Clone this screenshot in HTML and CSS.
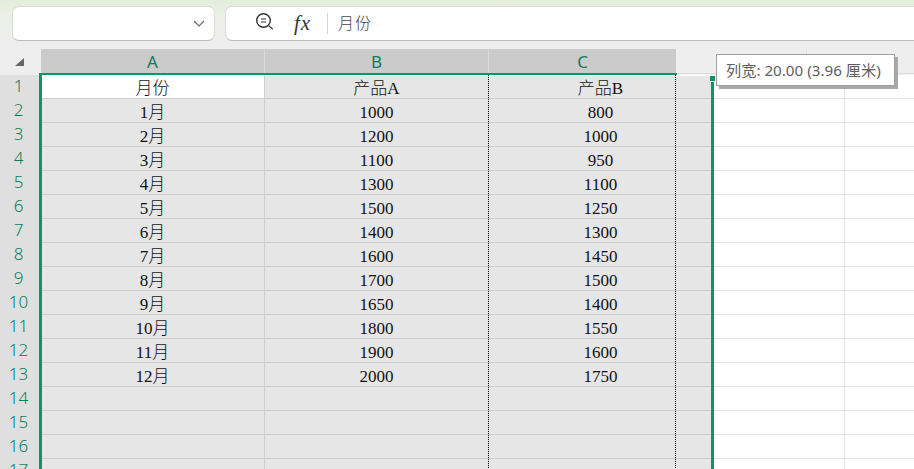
FILE: index.html
```html
<!DOCTYPE html>
<html lang="zh">
<head>
<meta charset="utf-8">
<title>工作表</title>
<link rel="stylesheet" href="styles.css">
</head>
<body>
<div class="app">
  <div class="topbar">
    <div class="namebox">
      <svg class="chev" width="12" height="7" viewBox="0 0 12 7"><path d="M1 1l5 5 5-5" fill="none" stroke="#666" stroke-width="1.1"/></svg>
    </div>
    <div class="formulabar">
      <svg class="zoomicon" width="20" height="20" viewBox="0 0 20 20"><circle cx="8.5" cy="8.5" r="6.8" fill="none" stroke="#333" stroke-width="1.4"/><path d="M6 7h5M6 10h5M13.4 13.4l4.4 3.8" fill="none" stroke="#333" stroke-width="1.2"/></svg>
      <span class="fx">fx</span>
      <span class="fdiv"></span>
      <span class="ftext">月份</span>
    </div>
  </div>
  <div class="sheet">
    <div class="headrow">
      <div class="corner"><svg width="9" height="9" viewBox="0 0 9 9"><path d="M9 0v8H0z" fill="#666"/></svg></div>
      <div class="hcell">A</div>
      <div class="hcell">B</div>
      <div class="hcell last">C</div>
      <div class="hfree"></div>
      <div class="hfree end"></div>
    </div>
    <div class="row first"><div class="rn">1</div><div class="c white">月份</div><div class="c">产品A</div><div class="c">产品B</div><div class="d"></div><div class="e"></div></div>
    <div class="row"><div class="rn">2</div><div class="c">1月</div><div class="c">1000</div><div class="c">800</div><div class="d"></div><div class="e"></div></div>
    <div class="row"><div class="rn">3</div><div class="c">2月</div><div class="c">1200</div><div class="c">1000</div><div class="d"></div><div class="e"></div></div>
    <div class="row"><div class="rn">4</div><div class="c">3月</div><div class="c">1100</div><div class="c">950</div><div class="d"></div><div class="e"></div></div>
    <div class="row"><div class="rn">5</div><div class="c">4月</div><div class="c">1300</div><div class="c">1100</div><div class="d"></div><div class="e"></div></div>
    <div class="row"><div class="rn">6</div><div class="c">5月</div><div class="c">1500</div><div class="c">1250</div><div class="d"></div><div class="e"></div></div>
    <div class="row"><div class="rn">7</div><div class="c">6月</div><div class="c">1400</div><div class="c">1300</div><div class="d"></div><div class="e"></div></div>
    <div class="row"><div class="rn">8</div><div class="c">7月</div><div class="c">1600</div><div class="c">1450</div><div class="d"></div><div class="e"></div></div>
    <div class="row"><div class="rn">9</div><div class="c">8月</div><div class="c">1700</div><div class="c">1500</div><div class="d"></div><div class="e"></div></div>
    <div class="row"><div class="rn">10</div><div class="c">9月</div><div class="c">1650</div><div class="c">1400</div><div class="d"></div><div class="e"></div></div>
    <div class="row"><div class="rn">11</div><div class="c">10月</div><div class="c">1800</div><div class="c">1550</div><div class="d"></div><div class="e"></div></div>
    <div class="row"><div class="rn">12</div><div class="c">11月</div><div class="c">1900</div><div class="c">1600</div><div class="d"></div><div class="e"></div></div>
    <div class="row"><div class="rn">13</div><div class="c">12月</div><div class="c">2000</div><div class="c">1750</div><div class="d"></div><div class="e"></div></div>
    <div class="row"><div class="rn">14</div><div class="c"></div><div class="c"></div><div class="c"></div><div class="d"></div><div class="e"></div></div>
    <div class="row"><div class="rn">15</div><div class="c"></div><div class="c"></div><div class="c"></div><div class="d"></div><div class="e"></div></div>
    <div class="row"><div class="rn">16</div><div class="c"></div><div class="c"></div><div class="c"></div><div class="d"></div><div class="e"></div></div>
    <div class="row"><div class="rn">17</div><div class="c"></div><div class="c"></div><div class="c"></div><div class="d"></div><div class="e"></div></div>

    <div class="sel-top"></div>
    <div class="sel-left"></div>
    <div class="sel-right"></div>
    <div class="sel-handle"></div>
    <div class="dots dots-b"></div>
    <div class="dots dots-c"></div>
    <div class="tip">列宽: 20.00 (3.96 厘米)</div>
  </div>
</div>
</body>
</html>
```

FILE: styles.css
```css
html, body { margin: 0; padding: 0; background: #fff; }
.app {
  width: 914px;
  height: 469px;
  overflow: hidden;
  font-family: "Noto Sans", "Noto Sans CJK SC", sans-serif;
}
.topbar {
  display: flex;
  gap: 11px;
  height: 49px;
  box-sizing: border-box;
  padding: 6px 0 8px 12px;
  background: linear-gradient(#e4edda 0, #eaefe5 14px, #eeeeee 42px);
}
.namebox, .formulabar {
  background: #fff;
  border: 1px solid #dcdcd6;
  border-bottom: 1px solid #bdbdb8;
  box-sizing: border-box;
  height: 35px;
  border-radius: 7px;
  display: flex;
  align-items: center;
}
.namebox { width: 203px; justify-content: flex-end; padding-right: 9px; }
.formulabar { flex: 1; border-radius: 7px 0 0 7px; border-right: 0; padding: 0 0 4px 29px; margin-left: -1px; }
.zoomicon { flex: none; }
.fx {
  font-family: "Liberation Serif", serif;
  font-style: italic;
  font-size: 21px;
  color: #333;
  margin-left: 19px;
  width: 19px;
  letter-spacing: 1px;
  line-height: 1;
  position: relative;
  top: 2px;
}
.fdiv { width: 1px; height: 21px; background: #d4d4d4; margin-left: 14px; position: relative; top: 2px; }
.ftext { font-size: 16px; color: #444; margin-left: 10px; letter-spacing: 1px; font-weight: 300; }

.sheet { position: relative; background: #eeeeee; }
.headrow {
  display: grid;
  grid-template-columns: 41px 224px 224px 187px 131px 1fr;
  height: 26px;
}
.corner { display: flex; align-items: center; justify-content: center; padding: 0 1px 0 0; box-sizing: border-box; }
.corner svg { margin-top: 1px; margin-left: -1px; }
.hcell {
  background: #cbcbcb;
  border-right: 1px solid #dadada;
  color: #107c5c;
  font-size: 17px;
  text-align: center;
  line-height: 26px;
  box-sizing: border-box;
}
.hcell.last { border-right: 0; }
.hfree { border-right: 1px solid #e0e0e0; border-bottom: 1px solid #dcdcdc; box-sizing: border-box; height: 25px; }
.hfree.end { border-right: 0; }

.row {
  display: grid;
  grid-template-columns: 41px 224px 224px 223px 133px 1fr;
  height: 24px;
  background: #fff;
}
.rn {
  background: #dfdfdf;
  color: #0a7f5d;
  font-size: 17px;
  font-weight: 300;
  line-height: 22px;
  text-align: center;
  padding-right: 4px;
  box-sizing: border-box;
}
.c {
  background: #e6e6e6;
  border-right: 1px solid #cfcfcf;
  border-bottom: 1px solid #cfcfcf;
  box-sizing: border-box;
  font-family: "Liberation Serif", "Noto Sans CJK SC", serif;
  font-size: 17px;
  font-weight: 300;
  line-height: 27px;
  color: #111;
  text-align: center;
  overflow: hidden;
}
.c.white { background: #fff; }
.row .c:nth-child(4) { border-right: 0; }
.d, .e { border-bottom: 1px solid #e4e4e4; box-sizing: border-box; }
.d { border-right: 1px solid #e4e4e4; }
.row.first .c { border-top: 1px solid #fff; line-height: 25px; }

.sel-top { position: absolute; left: 39px; top: 24px; width: 638px; height: 2px; background: #0f9468; }
.sel-left { position: absolute; left: 39px; top: 24px; width: 3px; bottom: -400px; background: #0f9468; }
.sel-right { position: absolute; left: 711px; top: 33px; width: 3px; bottom: -400px; background: #0f9468; }
.sel-handle { position: absolute; left: 710px; top: 27px; width: 5px; height: 5px; background: #0f9468; }
.dots { position: absolute; top: 26px; bottom: -400px; width: 1px; background: repeating-linear-gradient(#111 0 1px, transparent 1px 2px); }
.dots-b { left: 488px; }
.dots-c { left: 675px; }
.tip {
  position: absolute;
  left: 716px;
  top: 5px;
  width: 179px;
  height: 32px;
  box-sizing: border-box;
  background: #fff;
  border: 1px solid #a0a0a0;
  box-shadow: 3px 3px 0 #a8a8a8;
  color: #5f5f5f;
  font-size: 15.2px;
  line-height: 30px;
  padding-left: 9px;
  white-space: nowrap;
}
```
